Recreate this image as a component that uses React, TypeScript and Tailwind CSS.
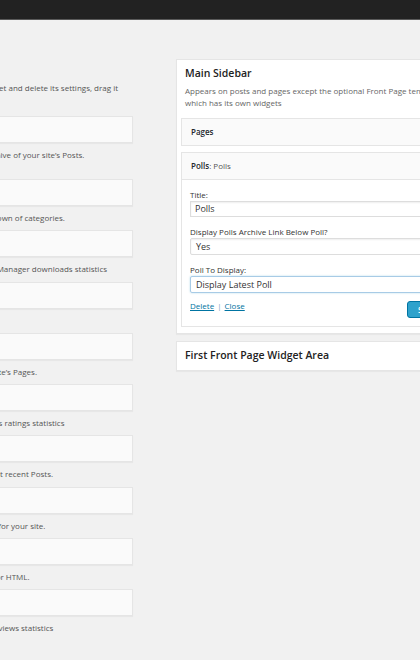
import React from "react";

const widgets: string[] = [
  "A monthly archive of your site\u2019s Posts.",
  "A list or dropdown of categories.",
  "WP-DownloadManager downloads statistics",
  "",
  "A list of your site\u2019s Pages.",
  "WP-PostRatings ratings statistics",
  "Your site\u2019s most recent Posts.",
  "A search form for your site.",
  "Arbitrary text or HTML.",
  "WP-PostViews views statistics",
];

export default function App() {
  return (
    <div className="w-[420px] h-[660px] overflow-hidden bg-[#f1f1f1] font-['Open_Sans',sans-serif] text-[#444]">
      <div className="h-[20px] bg-[#222] border-b border-[#5a5a5a]" />
      <div className="flex">
        {/* Available widgets column (clipped on the left) */}
        <div className="-ml-[56px] w-[189px] shrink-0 pt-[62px]">
          <div className="w-[174px] flex justify-end whitespace-nowrap text-[8px] leading-[12px] text-[#555]">
            <span>To activate a widget drag it to a sidebar or click on it. To deactivate a widget and delete its settings, drag it</span>
          </div>
          <div className="h-[12px]" />
          <div className="mt-[10px] flex flex-col">
            {widgets.map((d, i) => (
              <div key={i} className={i === 0 ? "mb-[18px]" : "mb-[6.25px]"}>
                <div className="h-[27px] bg-[#fafafa] border border-[#e5e5e5] shadow-[0_1px_1px_rgba(0,0,0,0.04)]" />
                <div className="mt-[6px] h-[12px] text-[8px] leading-[12px] text-[#555] whitespace-nowrap">{d}</div>
              </div>
            ))}
          </div>
        </div>

        {/* Sidebars */}
        <div className="ml-[43px] w-[285px] shrink-0 pt-[39px]">
          <div className="bg-white border border-[#e5e5e5] shadow-[0_1px_1px_rgba(0,0,0,0.04)] pb-[6px]">
            <div className="px-[8px] pt-[6px]">
              <div className="text-[10.5px] leading-[14px] font-semibold text-[#222]">Main Sidebar</div>
              <div className="mt-[5px] text-[8px] leading-[12px] text-[#666]">
                Appears on posts and pages except the optional Front Page template,
                <br />
                which has its own widgets
              </div>
            </div>
            <div className="mt-[9px] px-[4px] flex flex-col gap-[6px]">
              <div className="h-[28px] bg-[#fafafa] border border-[#e5e5e5] flex items-center pl-[9px] text-[8px] font-semibold text-[#23282d]">
                Pages
              </div>
              <div className="border border-[#e5e5e5] bg-white">
                <div className="h-[27px] bg-[#fafafa] border-b border-[#e5e5e5] flex items-center pl-[9px] text-[8px] text-[#23282d]">
                  <span className="font-semibold">Polls</span>
                  <span className="font-medium text-[#555]">: Polls</span>
                </div>
                <div className="px-[8px] pt-[9px] pb-[8px] text-[8px] leading-[12px] text-[#333]">
                  <div>Title:</div>
                  <div className="h-[16px] border border-[#ddd] shadow-[inset_0_1px_2px_rgba(0,0,0,0.07)] flex items-center px-[4px] text-[9px] text-[#333]">
                    Polls
                  </div>
                  <div className="mt-[9px]">Display Polls Archive Link Below Poll?</div>
                  <div className="h-[17px] border border-[#ddd] rounded-[2px] shadow-[inset_0_1px_2px_rgba(0,0,0,0.07)] flex items-center px-[5px] text-[9px] text-[#333]">
                    Yes
                  </div>
                  <div className="mt-[9px]">Poll To Display:</div>
                  <div className="h-[17px] border border-[#a8cbe6] rounded-[2px] shadow-[0_0_2px_rgba(30,140,190,0.35)] flex items-center px-[5px] text-[9px] text-[#333]">
                    Display Latest Poll
                  </div>
                  <div className="mt-[7px] flex justify-between items-start">
                    <div className="flex items-center gap-[3px]">
                      <span className="text-[#0074a2] underline">Delete</span>
                      <span className="text-[#7aa3c0]">|</span>
                      <span className="text-[#0074a2] underline">Close</span>
                    </div>
                    <div className="mt-[1px] h-[17px] w-[40px] rounded-[3px] bg-[#2ea2cc] border border-[#0074a2] text-white text-[8px] font-semibold flex items-center justify-center">
                      Save
                    </div>
                  </div>
                </div>
              </div>
            </div>
          </div>
          <div className="mt-[7px] h-[30px] bg-white border border-[#e5e5e5] shadow-[0_1px_1px_rgba(0,0,0,0.04)] flex items-center px-[8px] text-[10.5px] font-semibold text-[#222]">
            First Front Page Widget Area
          </div>
        </div>
      </div>
    </div>
  );
}
